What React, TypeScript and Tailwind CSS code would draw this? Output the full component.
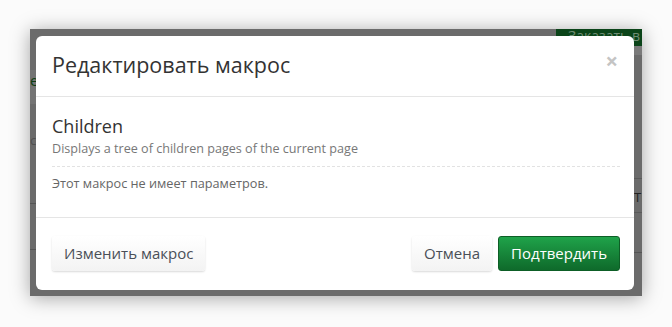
import React from 'react';

const font = { fontFamily: '"Open Sans", "Noto Sans", sans-serif' };

export default function App() {
  return (
    <div className="w-[672px] h-[327px] bg-[#fbfbfb] overflow-hidden pt-[29px] pl-[30px]" style={font}>
      {/* dimmed page frame */}
      <div className="relative w-[612px] h-[267px] bg-[#6b6b6b] shadow-[0_2px_18px_rgba(0,0,0,0.35)] pt-[7px] pl-[6px]">
        {/* bits of the page under the overlay */}
        <div className="absolute left-0 top-[41px] w-[6px] h-[34px] bg-[#747474]" />
        <div className="absolute left-0 top-[44px] text-[15px] text-[#0d3d12] leading-none">e</div>
        <div className="absolute left-0 top-[105px] text-[13px] text-[#505050] leading-none">c</div>
        <div className="absolute left-0 top-[174px] w-[6px] h-px bg-[#555]" />
        <div className="absolute left-0 top-[220px] w-[6px] h-px bg-[#555]" />
        <div className="absolute right-0 top-0 w-[86px] h-[17px] bg-[#0b4419] overflow-hidden pl-[12px] text-[14px] leading-[14px] text-[#6f8c74] whitespace-nowrap">Заказать в</div>
        <div className="absolute right-0 top-[17px] w-[8px] h-[9px] bg-[#7a7a7a]" />
        <div className="absolute right-0 top-[149px] w-[8px] h-px bg-[#5a5a5a]" />
        <div className="absolute right-0 top-[183px] w-[8px] h-px bg-[#5a5a5a]" />
        <div className="absolute right-0 top-[162px] text-[13px] text-[#222] leading-none w-[8px] overflow-hidden">TI</div>
        <div className="absolute right-0 top-[223px] w-[8px] h-px bg-[#555]" />

        {/* modal */}
        <div className="relative w-[598px] h-[254px] bg-white rounded-[6px] flex flex-col">
          <div className="h-[61px] border-b border-[#e5e5e5] flex items-center justify-between pl-[16px] pr-[16px]">
            <h4 className="text-[21.5px] text-[#333] leading-none mt-[-2px]">Редактировать макрос</h4>
            <span className="text-[22px] text-[#c4c4c4] font-bold leading-none mt-[-12px]">×</span>
          </div>
          <div className="flex-1 px-[16px] pt-[18px]">
            <div className="text-[18px] text-[#333] leading-[22px]">Children</div>
            <div className="text-[12.6px] text-[#777] leading-[17px] mt-[3px]">Displays a tree of children pages of the current page</div>
            <div className="border-b border-dashed border-[#e2e2e2] mt-[9px] mr-[-2px]" />
            <div className="text-[12.7px] text-[#666] leading-[17px] mt-[8px]">Этот макрос не имеет параметров.</div>
          </div>
          <div className="h-[73px] border-t border-[#e5e5e5] flex items-start justify-between pl-[16px] pr-[14px] pt-[18px]">
            <button className="h-[35px] px-[12px] rounded-[3px] bg-gradient-to-b from-white to-[#f3f3f3] shadow-[0_1px_2px_rgba(0,0,0,0.15)] text-[15px] text-[#4a4f57]">Изменить макрос</button>
            <div className="flex gap-[6px]">
              <button className="h-[35px] px-[12px] rounded-[3px] bg-gradient-to-b from-white to-[#f3f3f3] shadow-[0_1px_2px_rgba(0,0,0,0.15)] text-[15px] text-[#4a4f57]">Отмена</button>
              <button className="h-[35px] px-[12px] rounded-[3px] bg-gradient-to-b from-[#1fa34a] to-[#0f6a2b] border border-[#0d5e26] text-[15px] text-white">Подтвердить</button>
            </div>
          </div>
        </div>
      </div>
    </div>
  );
}
